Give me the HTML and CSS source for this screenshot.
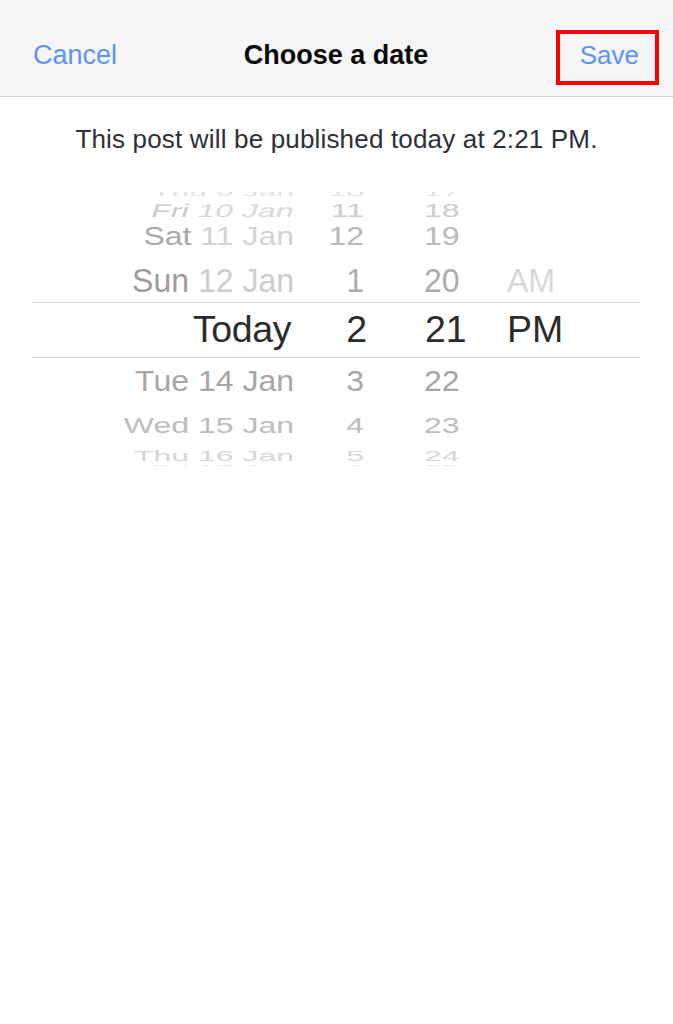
FILE: index.html
```html
<!DOCTYPE html>
<html lang="en">
<head>
<meta charset="utf-8">
<title>Choose a date</title>
<link rel="stylesheet" href="styles.css">
</head>
<body>
<header class="nav">
  <span class="nav-btn cancel">Cancel</span>
  <span class="nav-title">Choose a date</span>
  <span class="nav-btn save">Save</span>
  <span class="highlight"></span>
</header>
<p class="info">This post will be published today at 2:21 PM.</p>
<div class="picker">
  <div class="row r-p1"><span class="c-date">Thu 9 Jan</span><span class="c-hour">10</span><span class="c-min">17</span><span class="c-ap"></span></div>
  <div class="row r-fri"><span class="c-date skew"><span class="wd">Fri</span> 10 Jan</span><span class="c-hour">11</span><span class="c-min">18</span><span class="c-ap"></span></div>
  <div class="row r-sat"><span class="c-date"><span class="wd">Sat</span> 11 Jan</span><span class="c-hour">12</span><span class="c-min">19</span><span class="c-ap"></span></div>
  <div class="row r-sun"><span class="c-date"><span class="wd">Sun</span> 12 Jan</span><span class="c-hour">1</span><span class="c-min">20</span><span class="c-ap">AM</span></div>
  <div class="row r-sel"><span class="c-date">Today</span><span class="c-hour">2</span><span class="c-min">21</span><span class="c-ap">PM</span></div>
  <div class="row r-tue"><span class="c-date">Tue 14 Jan</span><span class="c-hour">3</span><span class="c-min">22</span><span class="c-ap"></span></div>
  <div class="row r-wed"><span class="c-date">Wed 15 Jan</span><span class="c-hour">4</span><span class="c-min">23</span><span class="c-ap"></span></div>
  <div class="row r-thu"><span class="c-date">Thu 16 Jan</span><span class="c-hour">5</span><span class="c-min">24</span><span class="c-ap"></span></div>
  <div class="row r-p2"><span class="c-date">Fri 17 Jan</span><span class="c-hour">6</span><span class="c-min">25</span><span class="c-ap"></span></div>
</div>
</body>
</html>
```

FILE: styles.css
```css
* { box-sizing: border-box; }
html, body {
  margin: 0;
  padding: 0;
  background: #ffffff;
  font-family: "Liberation Sans", Arial, sans-serif;
}
body { width: 673px; min-height: 1024px; }

.nav {
  position: relative;
  display: grid;
  grid-template-columns: 1fr auto 1fr;
  align-items: start;
  height: 97px;
  padding: 39px 34px 0 33px;
  background: #f6f6f8;
  border-bottom: 1px solid #d3d3d7;
}
.nav-btn {
  font-size: 27px;
  line-height: 32px;
  color: #5a94f8;
}
.cancel { justify-self: start; }
.save { justify-self: end; font-size: 26px; }
.nav-title {
  font-size: 27px;
  line-height: 32px;
  font-weight: bold;
  color: #0a0a0a;
}
.highlight {
  position: absolute;
  left: 556px;
  top: 30px;
  width: 103px;
  height: 55px;
  border: 4px solid #ff0000;
}

.info {
  margin: 0;
  padding-top: 26px;
  font-size: 26px;
  line-height: 32px;
  letter-spacing: 0.17px;
  text-align: center;
  color: #2d3038;
}

.picker {
  margin: 27px 33px 0 32px;
  display: flex;
  flex-direction: column;
  clip-path: inset(10px 0 6px 0);
}
.row {
  display: grid;
  grid-template-columns: 262px 70px 143px 1fr;
  align-items: center;
  flex: none;
  font-size: 32px;
  line-height: 1;
  white-space: nowrap;
  transform-origin: center;
}
.c-date { text-align: right; }
.c-hour { text-align: right; }
.c-min { padding-left: 60px; }
.c-ap { padding-left: 0; }

.r-p1 { height: 16px; transform: scaleY(0.3); color: #e2e2e2; }
.r-fri { height: 16px; transform: scaleY(0.57); color: #cdcdcd; }
.r-fri .c-date { color: #d9d9d9; }
.r-fri .wd { color: #c9c9c9; }
.skew { display: block; transform: skewX(-10deg); }
.r-sat { height: 43px; transform: scaleY(0.8); color: #bababa; }
.r-sat .c-date { color: #d3d3d3; }
.r-sat .wd { color: #a9a9a9; }
.r-sun { height: 45px; transform: scaleY(1.06); color: #acacac; }
.r-sun .c-date { color: #cdcdcd; }
.r-sun .wd { color: #9c9c9c; }
.r-sun .c-ap { color: #d9d9d9; }
.r-sel {
  height: 56px;
  border-top: 1px solid #d8d8d8;
  border-bottom: 1px solid #d8d8d8;
  font-size: 37.5px;
  color: #2c2c2c;
}
.r-sel .c-date { padding-right: 3px; letter-spacing: -0.4px; }
.r-sel .c-hour { margin-right: -3px; }
.r-sel .c-min { padding-left: 61px; }
.r-tue { height: 46px; transform: scaleY(0.95); color: #a6a6a6; }
.r-wed { height: 42px; transform: scaleY(0.7); color: #bdbdbd; }
.r-thu { height: 12px; transform: scaleY(0.44); color: #d6d6d6; }
.r-p2 { height: 14px; transform: scaleY(0.25); color: #e4e4e4; }
```
